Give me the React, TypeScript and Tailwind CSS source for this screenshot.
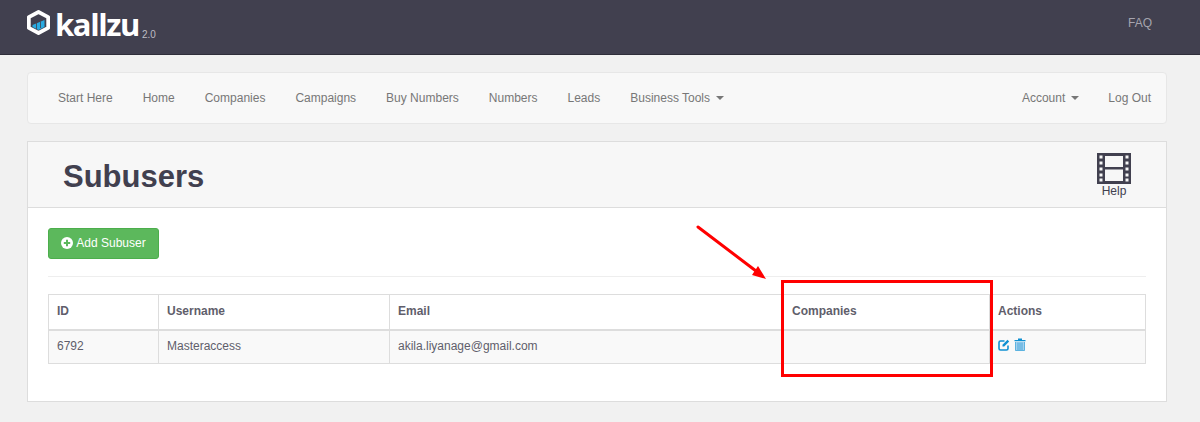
const navLeft = ["Start Here", "Home", "Companies", "Campaigns", "Buy Numbers", "Numbers", "Leads"];

const Caret = () => (
    <span className="ml-[6px] inline-block h-0 w-0 border-x-[4px] border-t-[4px] border-x-transparent border-t-[#777777]" />
);

const Logo = () => (
    <svg width="23" height="25" viewBox="0 0 23 25">
        <path d="M11.5 2 L21.2 7.1 V17.9 L11.5 23 L1.8 17.9 V7.1 Z" fill="#41404f" stroke="#ffffff" strokeWidth="3.8" strokeLinejoin="round" />
        <path d="M5.5 15 L17.5 10 V17 L11.5 20 L5.5 17 Z" fill="#29abe2" />
        <path d="M9.5 13 V19 M13.5 11.5 V18" stroke="#41404f" strokeWidth="0.8" />
    </svg>
);

const FilmIcon = () => (
    <svg width="34" height="31" viewBox="0 0 34 31">
        <rect x="0" y="0" width="34" height="31" fill="#41404f" />
        <rect x="8" y="3" width="18" height="11" fill="#f7f7f7" />
        <rect x="8" y="16.5" width="18" height="11.5" fill="#f7f7f7" />
        {[3, 9, 15, 21, 26].map((y) => (
            <g key={y} fill="#f7f7f7">
                <rect x="2.5" y={y - 0.5} width="3" height="3" />
                <rect x="28.5" y={y - 0.5} width="3" height="3" />
            </g>
        ))}
    </svg>
);

const EditIcon = () => (
    <svg width="12" height="12" viewBox="0 0 12 12" fill="none" className="text-[#0e90d2]">
        <path d="M6.5 2 H2.5 A1.5 1.5 0 0 0 1 3.5 V9.5 A1.5 1.5 0 0 0 2.5 11 H8.5 A1.5 1.5 0 0 0 10 9.5 V6.5" stroke="currentColor" strokeWidth="1.6" />
        <path d="M4.5 7.5 V5.8 L9.5 0.8 L11.2 2.5 L6.2 7.5 Z" fill="currentColor" />
    </svg>
);

const TrashIcon = () => (
    <svg width="12" height="13" viewBox="0 0 12 13" className="mb-[2px] text-[#0e90d2]">
        <path d="M0.5 2 H4 V0.5 H8 V2 H11.5 V3.2 H0.5 Z" fill="currentColor" />
        <path d="M1.5 4 H10.5 V12.5 H1.5 Z" fill="#a5d0ee" />
        <path d="M1.5 4 V12.5 H10.5 V4 M4 4.5 V12 M6 4.5 V12 M8 4.5 V12" stroke="currentColor" strokeWidth="0.6" fill="none" />
    </svg>
);

export default function App() {
    return (
        <div className="relative h-[422px] w-[1200px] overflow-hidden bg-[#f1f1f1] font-['Liberation_Sans',Arial,sans-serif] text-[12px] text-[#5f5e6b]">
            {/* Top bar */}
            <header className="flex h-[55px] items-start justify-between border-b border-[#2f2e3a] bg-[#41404f] pr-[48px] pl-[27px]">
                <div className="flex items-start pt-[10px]">
                    <Logo />
                    <span className="ml-[5px] font-['Open_Sans',sans-serif] text-[31px] leading-[29px] font-bold tracking-[-1.4px] text-white">kallzu</span>
                    <span className="mt-[20px] ml-[3px] text-[10px] leading-[10px] text-[#bdbdc4]">2.0</span>
                </div>
                <span className="pt-[16px] text-[12px] leading-[14px] text-[#a5a4ae]">FAQ</span>
            </header>

            {/* Nav */}
            <nav className="mt-[17px] ml-[27px] flex h-[52px] w-[1140px] items-center justify-between rounded-[4px] border border-[#e7e7e7] bg-[#f8f8f8] pr-[15px] pl-[30px] text-[#777777]">
                <div className="flex items-center gap-[30px]">
                    {navLeft.map((item) => (
                        <span key={item}>{item}</span>
                    ))}
                    <span className="flex items-center">
                        Business Tools
                        <Caret />
                    </span>
                </div>
                <div className="flex items-center gap-[29px]">
                    <span className="flex items-center">
                        Account
                        <Caret />
                    </span>
                    <span>Log Out</span>
                </div>
            </nav>

            {/* Panel */}
            <section className="mt-[17px] ml-[27px] h-[261px] w-[1140px] border border-[#dddddd] bg-white">
                <div className="flex h-[66px] items-start justify-between border-b border-[#dddddd] bg-[#f7f7f7] pr-[35px] pl-[35px]">
                    <h1 className="pt-[17px] text-[31px] leading-[36px] font-bold text-[#41404f]">Subusers</h1>
                    <div className="flex flex-col items-center pt-[11px] text-[#41404f]">
                        <FilmIcon />
                        <span className="text-[12px] leading-[14px]">Help</span>
                    </div>
                </div>

                <div className="px-[20px] pt-[20px]">
                    <button className="flex h-[31px] w-[111px] items-center justify-center gap-[3px] rounded-[3px] border border-[#4cae4c] bg-[#5cb85c] pb-[2px] text-[12px] text-white">
                        <svg width="12" height="12" viewBox="0 0 12 12">
                            <circle cx="6" cy="6" r="6" fill="#ffffff" />
                            <path d="M6 2.8 V9.2 M2.8 6 H9.2" stroke="#5cb85c" strokeWidth="2" />
                        </svg>
                        Add Subuser
                    </button>
                    <div className="mt-[17px] border-t border-[#eeeeee]" />

                    <table className="mt-[17px] w-[1098px] table-fixed border-collapse text-[12px]">
                        <colgroup>
                            <col className="w-[110px]" />
                            <col className="w-[231px]" />
                            <col className="w-[394px]" />
                            <col className="w-[206px]" />
                            <col />
                        </colgroup>
                        <thead>
                            <tr className="h-[35px] text-left">
                                {["ID", "Username", "Email", "Companies", "Actions"].map((h) => (
                                    <th key={h} className="border border-b-2 border-[#dddddd] px-[8px] pb-[2px] font-bold">{h}</th>
                                ))}
                            </tr>
                        </thead>
                        <tbody>
                            <tr className="h-[34px] bg-[#f9f9f9]">
                                <td className="border border-[#dddddd] px-[8px] pb-[2px]">6792</td>
                                <td className="border border-[#dddddd] px-[8px] pb-[2px]">Masteraccess</td>
                                <td className="border border-[#dddddd] px-[8px] pb-[2px]">akila.liyanage@gmail.com</td>
                                <td className="border border-[#dddddd] px-[8px] pb-[2px]" />
                                <td className="border border-[#dddddd] px-[8px] pb-[2px]">
                                    <div className="flex items-center gap-[4px] pb-[1px]">
                                        <EditIcon />
                                        <TrashIcon />
                                    </div>
                                </td>
                            </tr>
                        </tbody>
                    </table>
                </div>
            </section>

            {/* Red annotation laid over the screenshot */}
            <div className="absolute top-[280px] left-[781px] h-[97px] w-[212px] border-[3px] border-[#ff0000]" />
            <svg className="absolute top-[222px] left-[692px]" width="80" height="62" viewBox="0 0 80 62">
                <path d="M6 5 L64 49" stroke="#ff0000" strokeWidth="3" strokeLinecap="round" />
                <path d="M74 57 L60 53 L66 44 Z" fill="#ff0000" />
            </svg>
        </div>
    );
}
